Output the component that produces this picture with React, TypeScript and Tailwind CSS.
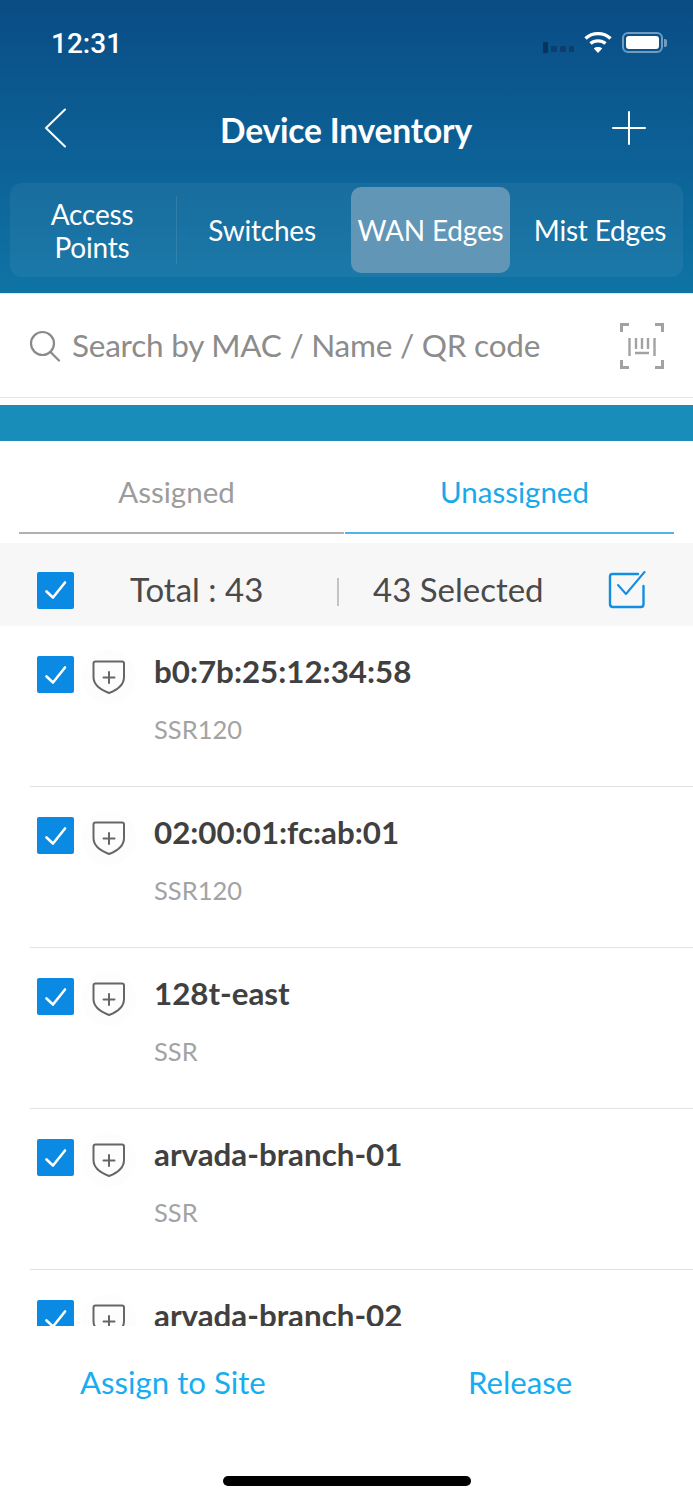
const devices = [
  { name: "b0:7b:25:12:34:58", model: "SSR120" },
  { name: "02:00:01:fc:ab:01", model: "SSR120" },
  { name: "128t-east", model: "SSR" },
  { name: "arvada-branch-01", model: "SSR" },
  { name: "arvada-branch-02", model: "" },
];

const CheckBox = () => (
  <div className="w-[37px] h-[37px] rounded-[2px] bg-[#0a8ae2] flex items-center justify-center shrink-0">
    <svg width="26" height="26" viewBox="0 0 26 26" fill="none" stroke="#fff" strokeWidth="2.6" strokeLinecap="round" strokeLinejoin="round">
      <path d="M3.5 14.5 L10 20.5 L22 5.5" />
    </svg>
  </div>
);

const ShieldPlus = () => (
  <div className="w-[54px] h-[54px] rounded-full bg-[#fdfdfd] flex items-center justify-center shrink-0">
    <svg width="36" height="36" viewBox="0 0 36 36" fill="none" stroke="#666" strokeWidth="2" strokeLinecap="round" strokeLinejoin="round">
      <path d="M4.5 2.5 H31 Q33 2.5 33 4.5 V18 C33 26 26 31 18 34 C10 31 2.5 26 2.5 18 V4.5 Q2.5 2.5 4.5 2.5 Z" />
      <path d="M18 13 V24 M12.5 18.5 H23.5" />
    </svg>
  </div>
);

const App = () => {
  return (
    <div className="w-[693px] h-[1500px] bg-white flex flex-col overflow-hidden font-['Lato','Noto_Sans',sans-serif]">
      {/* blue header */}
      <div className="h-[293px] bg-gradient-to-b from-[#0a4c85] to-[#0f74a5] flex flex-col shrink-0">
        <div className="h-[84px] pl-[51px] pr-[26px] flex items-center justify-between">
          <span className="text-white text-[28px] mt-[3px] font-medium font-['Roboto',sans-serif]">12:31</span>
          <div className="flex items-center">
            <div className="flex items-center gap-[3px] mr-[9px] mt-[10px]">
              <div className="w-[5px] h-[11px] rounded-[1px] bg-[#07345f]" />
              <div className="w-[6px] h-[6px] rounded-[1px] bg-[#0e3d6b] mt-[4px]" />
              <div className="w-[6px] h-[6px] rounded-[1px] bg-[#0e3d6b] mt-[4px]" />
              <div className="w-[5px] h-[6px] rounded-[1px] bg-[#0e3d6b] mt-[4px]" />
            </div>
            <svg width="30" height="24" viewBox="0 0 30 24" fill="none" stroke="#fff" strokeWidth="3.4" className="mr-[9px]">
              <path d="M2.5 8.5 C9.5 2 20.5 2 27.5 8.5" />
              <path d="M7.5 13.5 C11.5 10 18.5 10 22.5 13.5" />
              <path d="M15 23 L10.8 18.4 C13 16.6 17 16.6 19.2 18.4 Z" fill="#fff" stroke="none" />
            </svg>
            <div className="w-[41px] h-[21px] mt-[1px] rounded-[6px] border-2 border-[#6f9cc0] p-[2px] flex">
              <div className="flex-1 rounded-[3px] bg-white" />
            </div>
            <div className="w-[3px] h-[8px] mt-[1px] rounded-r-[2px] bg-[#6f9cc0] ml-[1px]" />
          </div>
        </div>

        <div className="h-[99px] pl-[44px] pr-[47px] flex items-start justify-between pt-[24px]">
          <div className="w-[36px]">
            <svg width="24" height="40" viewBox="0 0 24 40" fill="none" stroke="#fff" strokeWidth="2" strokeLinecap="round" strokeLinejoin="round">
              <path d="M21 1.5 L2 20 L21 38.5" />
            </svg>
          </div>
          <span className="text-white text-[33.6px] leading-[46px] -mt-[1px] font-bold tracking-[-0.2px]">Device Inventory</span>
          <svg width="34" height="34" viewBox="0 0 34 34" fill="none" stroke="#fff" strokeWidth="2" strokeLinecap="round" className="mt-[3px]">
            <path d="M17 1 V33 M1 17 H33" />
          </svg>
        </div>

        <div className="mx-[10px] h-[94px] rounded-[12px] bg-white/[0.05] flex items-center text-white text-[28px] leading-[33px] tracking-[-0.2px]">
          <div className="w-[167px] h-[68px] border-r border-white/10 flex items-center justify-center text-center pr-[2px]">
            <span className="mt-[1px]">Access<br />Points</span>
          </div>
          <div className="w-[170px] text-center">Switches</div>
          <div className="ml-[4px] w-[159px] h-[86px] rounded-[10px] bg-[#6196b6] flex items-center justify-center">WAN Edges</div>
          <div className="flex-1 text-center pl-[7px]">Mist Edges</div>
        </div>
      </div>

      {/* search */}
      <div className="h-[105px] border-t border-[#e4e4e4] border-b shrink-0 flex items-center pl-[29px] pr-[29px] bg-white mb-[7px]">
        <svg width="32" height="32" viewBox="0 0 32 32" fill="none" stroke="#8a8a8a" strokeWidth="2.2" strokeLinecap="round">
          <circle cx="13.5" cy="13.5" r="11.5" />
          <path d="M21.5 22 L30 30.5" />
        </svg>
        <span className="ml-[11px] text-[31.5px] tracking-[-0.23px] text-[#8c8c8c] flex-1">Search by MAC / Name / QR code</span>
        <svg width="44" height="46" viewBox="0 0 44 46" fill="none" stroke="#a2a2a2" strokeWidth="3">
          <path d="M1.5 9 V1.5 H9 M35 1.5 H42.5 V9 M1.5 37 V44.5 H9 M35 44.5 H42.5 V37" />
          <path d="M9.5 15 V33 M34.5 15 V33 M16 15 V26 M22 15 V26 M28 15 V26 M15 30 H29" strokeWidth="2.4" />
        </svg>
      </div>

      <div className="h-[36px] bg-[#188dba] shrink-0" />

      {/* assigned / unassigned */}
      <div className="h-[93px] flex px-[19px] text-[29.5px] shrink-0">
        <div className="w-[327px] border-b-[2px] border-[#b0b0b0] flex items-center justify-center pt-[12px] pr-[10px] text-[#9c9c9c] mr-[1px]">Assigned</div>
        <div className="w-[331px] border-b-[2px] border-[#4fb3ee] flex items-center justify-center pt-[12px] pl-[10px] text-[#17a9ea]">Unassigned</div>
      </div>

      {/* totals */}
      <div className="mt-[9px] h-[83px] bg-[#f7f7f7] flex items-center pl-[37px] pt-[11px] shrink-0 text-[33px] text-[#4a4a4a]">
        <CheckBox />
        <span className="ml-[56px] w-[207px]">Total : 43</span>
        <div className="w-[2px] h-[28px] bg-[#c4c4c4] mt-[4px]" />
        <span className="ml-[34px] w-[236px]">43 Selected</span>
        <svg width="38" height="38" viewBox="0 0 38 38" fill="none" stroke="#128fe0" strokeWidth="2.4" strokeLinecap="round" strokeLinejoin="round" className="-mt-[1px] -ml-[1px]">
          <path d="M30 3 H4.5 Q2 3 2 5.5 V33 Q2 36 5 36 H33 Q35.5 36 35.5 33 V15" />
          <path d="M10 14 L18 23 L36.5 1" strokeWidth="2" />
        </svg>
      </div>

      {/* device list */}
      <div className="h-[700px] overflow-hidden shrink-0">
        {devices.map((device, index) => (
          <div key={index} className="h-[161px] pl-[30px]">
            <div className="h-[161px] flex items-start border-b border-[#e2e2e2]">
              <div className="flex items-start ml-[7px] mt-[30px]">
                <CheckBox />
                <div className="ml-[8px] -mt-[6px]">
                  <ShieldPlus />
                </div>
              </div>
              <div className="ml-[18px] mt-[23px]">
                <div className="text-[31.3px] leading-[44px] font-bold text-[#404040]">{device.name}</div>
                {device.model && (
                  <div className="mt-[20px] text-[25.5px] leading-[32px] text-[#a3a3a3]">{device.model}</div>
                )}
              </div>
            </div>
          </div>
        ))}
      </div>

      {/* footer */}
      <div className="flex-1 bg-white relative">
        <div className="flex text-[31.2px] text-[#17adf0] pt-[34px] leading-[44px]">
          <span className="ml-[80px] w-[388px]">Assign to Site</span>
          <span>Release</span>
        </div>
        <div className="absolute left-[223px] bottom-[14px] w-[248px] h-[10px] rounded-full bg-black" />
      </div>
    </div>
  );
};

export default App;
